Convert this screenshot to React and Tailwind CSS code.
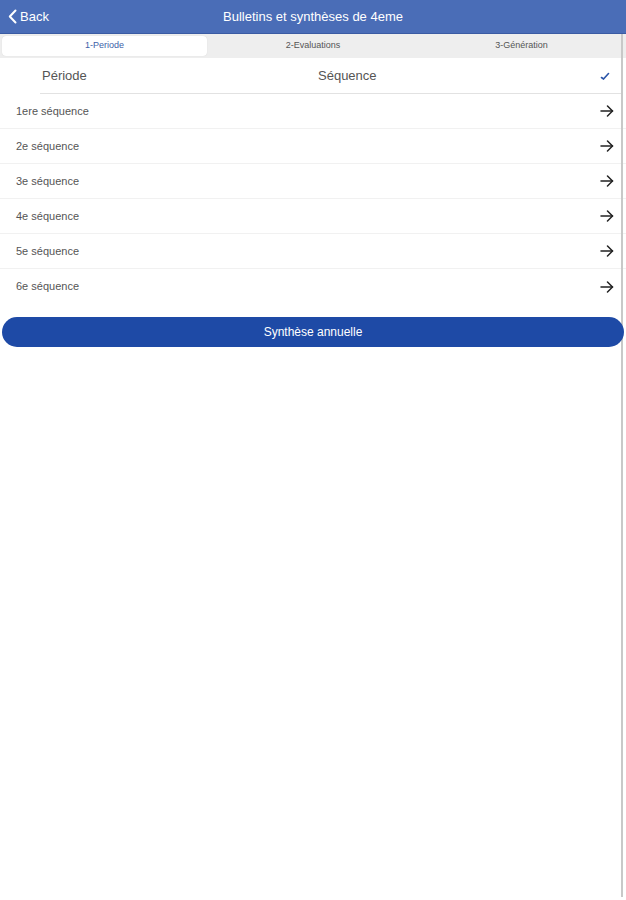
import React from "react";

const rows = ["1ere séquence", "2e séquence", "3e séquence", "4e séquence", "5e séquence", "6e séquence"];

function Arrow() {
  return (
    <svg width="14" height="12" viewBox="0 0 14 12" fill="none" stroke="#222" strokeWidth="1.5" strokeLinecap="round" strokeLinejoin="round">
      <path d="M1 6 H12.5" />
      <path d="M7.5 1 L12.5 6 L7.5 11" />
    </svg>
  );
}

export default function App() {
  return (
    <div className="relative w-[626px] h-[900px] bg-white overflow-hidden" style={{ fontFamily: '"Liberation Sans", Arial, sans-serif' }}>
      {/* Top bar */}
      <div className="h-[34px] bg-[#4a6db7] border-b border-[#3a5ba3] flex items-center relative">
        <div className="flex items-center pl-[8px] text-white text-[13px] gap-[3px]">
          <svg width="9" height="15" viewBox="0 0 9 15" fill="none" stroke="white" strokeWidth="2" strokeLinecap="round" strokeLinejoin="round">
            <path d="M7.5 1.5 L1.8 7.5 L7.5 13.5" />
          </svg>
          <span>Back</span>
        </div>
        <div className="absolute inset-0 flex items-center justify-center text-white text-[13px]">
          Bulletins et synthèses de 4eme
        </div>
      </div>

      {/* Tabs */}
      <div className="h-[24px] bg-[#eeeeee] flex px-[2px] py-[2px] text-[9px] text-[#555]">
        <div className="w-[205px] bg-white rounded-[4px] flex items-center justify-center text-[#3e5fa8] shadow-[0_0_1px_rgba(0,0,0,0.15)]">1-Periode</div>
        <div className="w-[212px] flex items-center justify-center">2-Evaluations</div>
        <div className="flex-1 flex items-center justify-center">3-Génération</div>
      </div>

      {/* Header row */}
      <div className="h-[36px] flex items-center relative text-[13px] text-[#555]">
        <span className="ml-[42px]">Période</span>
        <span className="absolute left-[318px]">Séquence</span>
        <svg className="absolute left-[600px]" width="10" height="8" viewBox="0 0 10 8" fill="none" stroke="#2b55a8" strokeWidth="1.6" strokeLinecap="round">
          <path d="M1.5 5.5 L3.5 7 L8.5 1.5" />
        </svg>
        <div className="absolute left-[40px] right-[5px] bottom-0 h-[1px] bg-[#e2e2e2]" />
      </div>

      {/* Rows */}
      <div>
        {rows.map((r, i) => (
          <div key={r} className={"h-[35px] flex items-center justify-between pl-[16px] pr-[12px] " + (i < rows.length - 1 ? "border-b border-[#f1f1f1]" : "")}>
            <span className="text-[11px] text-[#555]">{r}</span>
            <Arrow />
          </div>
        ))}
      </div>

      {/* Button */}
      <div className="mt-[13px] mx-[2px] h-[30px] rounded-full bg-[#1e4aa6] flex items-center justify-center text-white text-[12px] relative z-10">
        Synthèse annuelle
      </div>

      {/* Scroll indicator line */}
      <div className="absolute left-[621px] top-[34px] w-[2px] h-[863px] bg-[#c8c8c8]" />
    </div>
  );
}
